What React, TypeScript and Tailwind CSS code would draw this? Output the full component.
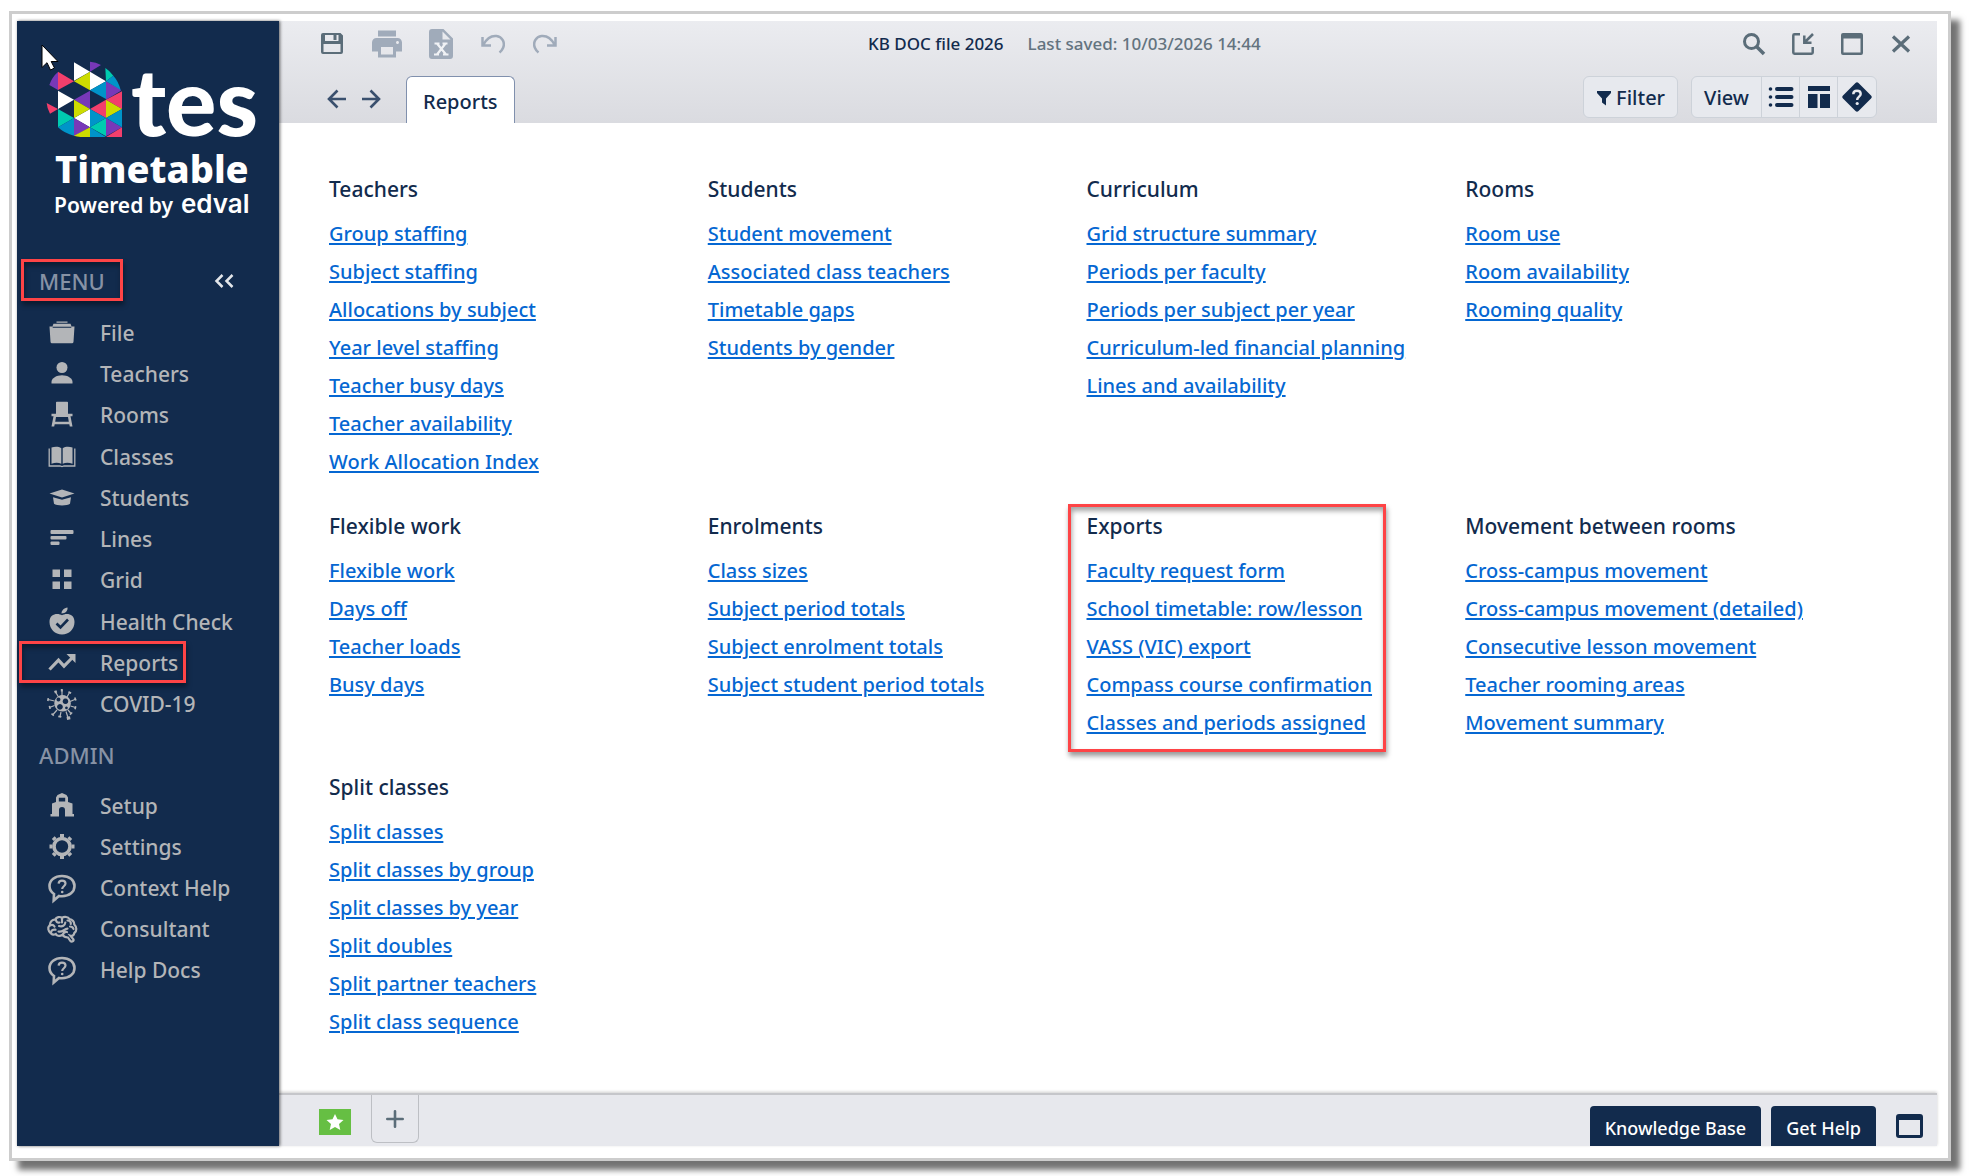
import type { ReactNode } from 'react';
import { MdPrint } from 'react-icons/md';

interface NavItem {
  label: string;
  icon: ReactNode;
  marked?: boolean;
}

interface ReportGroup {
  title: string;
  links: string[];
  marked?: boolean;
}

const reportGroups: ReportGroup[] = [
  {
    title: 'Teachers',
    links: [
      'Group staffing',
      'Subject staffing',
      'Allocations by subject',
      'Year level staffing',
      'Teacher busy days',
      'Teacher availability',
      'Work Allocation Index',
    ],
  },
  {
    title: 'Students',
    links: ['Student movement', 'Associated class teachers', 'Timetable gaps', 'Students by gender'],
  },
  {
    title: 'Curriculum',
    links: [
      'Grid structure summary',
      'Periods per faculty',
      'Periods per subject per year',
      'Curriculum-led financial planning',
      'Lines and availability',
    ],
  },
  { title: 'Rooms', links: ['Room use', 'Room availability', 'Rooming quality'] },
  { title: 'Flexible work', links: ['Flexible work', 'Days off', 'Teacher loads', 'Busy days'] },
  {
    title: 'Enrolments',
    links: ['Class sizes', 'Subject period totals', 'Subject enrolment totals', 'Subject student period totals'],
  },
  {
    title: 'Exports',
    marked: true,
    links: [
      'Faculty request form',
      'School timetable: row/lesson',
      'VASS (VIC) export',
      'Compass course confirmation',
      'Classes and periods assigned',
    ],
  },
  {
    title: 'Movement between rooms',
    links: [
      'Cross-campus movement',
      'Cross-campus movement (detailed)',
      'Consecutive lesson movement',
      'Teacher rooming areas',
      'Movement summary',
    ],
  },
  {
    title: 'Split classes',
    links: [
      'Split classes',
      'Split classes by group',
      'Split classes by year',
      'Split doubles',
      'Split partner teachers',
      'Split class sequence',
    ],
  },
];

// Sidebar glyphs share a 32px box and take the text colour
function NavIcon({ children }: { children: ReactNode }) {
  return (
    <svg viewBox="0 0 32 32" className="w-8 h-8 shrink-0" fill="currentColor" aria-hidden="true">
      {children}
    </svg>
  );
}

const helpIcon = (
  <NavIcon>
    <path
      d="M8 22C4.800 19.800 3.500 17 3.500 14C3.500 8 9 4 16 4C23.500 4 28.500 8.200 28.500 14C28.500 20 23.500 24.200 16 24.200C14.800 24.200 13.800 24.100 13 23.900L7.700 28.500Z"
      fill="none"
      stroke="currentColor"
      strokeWidth="2.600"
    />
    <path d="M12.600 11.700C12.800 9.500 14.200 8.700 16 8.700C18.200 8.700 19.500 9.900 19.500 11.600C19.500 14.300 16.200 14.200 16.200 17" fill="none" stroke="currentColor" strokeWidth="2.200" />
    <circle cx="16.200" cy="20" r="1.300" />
  </NavIcon>
);

const menuItems: NavItem[] = [
  {
    label: 'File',
    icon: (
      <NavIcon>
        <path d="M10.500 4.500h11v1.200h-11zM7.500 6.800h17l1.200 3H6.300zM3.500 9.500h2.800l.6 1.200h18.200l.6-1.200h2.800l-1 15.200q-.1 1.500-1.500 1.500H6q-1.400 0-1.500-1.500z" />
      </NavIcon>
    ),
  },
  {
    label: 'Teachers',
    icon: (
      <NavIcon>
        <circle cx="16" cy="9.500" r="5.500" />
        <path d="M5.500 25.500v-1.500c0-3.800 5-6.700 10.500-6.700s10.500 2.900 10.500 6.700v1.500z" />
      </NavIcon>
    ),
  },
  {
    label: 'Rooms',
    icon: (
      <NavIcon>
        <path d="M10 3.500q0-.8.800-.8h10.400q.8 0 .8.800v11.200h4.500v2.600h-2l2 10.200h-2.700l-.5-2.200H8.700l-.5 2.200H5.500l2-10.200h-2v-2.600h4.500zM10 18l-.8 4.800h13.600L22 18z" fillRule="evenodd" />
      </NavIcon>
    ),
  },
  {
    label: 'Classes',
    icon: (
      <NavIcon>
        <path d="M5.500 6.500C9 5.400 12.500 5.400 15.300 7.200V22.800C12.500 21.400 9 21.400 5.500 22.800zM26.500 6.500C23 5.400 19.500 5.400 16.700 7.200V22.800C19.500 21.400 23 21.400 26.500 22.800z" />
        <path d="M3.200 7.500V25H14l2 .6 2-.6h10.800V7.500" fill="none" stroke="currentColor" strokeWidth="1.300" />
      </NavIcon>
    ),
  },
  {
    label: 'Students',
    icon: (
      <NavIcon>
        <path d="M3.500 11.500L16 7.500l12.500 4L16 15.500zM7 15.200L16 17.800l9-2.600-1 6.500C21.500 24 10.500 24 8 21.700z" />
      </NavIcon>
    ),
  },
  {
    label: 'Lines',
    icon: (
      <NavIcon>
        <rect x="4.500" y="7" width="23" height="4" rx="1" />
        <rect x="4.500" y="13" width="16" height="3.600" rx="1" />
        <rect x="4.500" y="18.500" width="9" height="3.600" rx="1" />
      </NavIcon>
    ),
  },
  {
    label: 'Grid',
    icon: (
      <NavIcon>
        <path d="M6.500 5.500h7.500v7.500H6.500zM18 5.500h7.500v7.500H18zM6.500 17.500h7.500V25H6.500zM18 17.500h7.500V25H18z" />
      </NavIcon>
    ),
  },
  {
    label: 'Health Check',
    icon: (
      <NavIcon>
        <path d="M15.500 7.500C15.500 4.500 18 2 21.500 1.500C22 4.500 19.500 7.500 15.500 7.500zM16 9.300C19 7 28.500 6.500 28.500 16C28.500 23 23 28.500 16 28.500S3.500 23 3.500 16C3.500 6.500 13 7 16 9.300z" />
        <path d="M10.500 17.500l4 3.800 7.500-7.800" fill="none" stroke="#122b4d" strokeWidth="2.600" />
      </NavIcon>
    ),
  },
  {
    label: 'Reports',
    marked: true,
    icon: (
      <NavIcon>
        <path d="M3.500 22.500L12.500 13.200l5.500 6L26 11" fill="none" stroke="currentColor" strokeWidth="3.200" />
        <path d="M20.500 7H29.500V16z" />
      </NavIcon>
    ),
  },
  {
    label: 'COVID-19',
    icon: (
      <NavIcon>
        <g fill="none" stroke="currentColor" strokeWidth="1.200">
          <path d="M16 8V2M12.500 9L9.500 4M21 9l2.500-4.500M24 13.500l6-2.500M24.500 18l5 1.500M22 22l3.500 4M20 23.500l2 6M15 24l-1 4.500M11 22l-4 4.500M8.500 17.500L3.500 19.500M8.500 13L2 11.500" />
        </g>
        <path d="M14.800 1h2v2.400h-2zM8 3l2.500-.8.7 2.400L9 5.400zM22.800 3l2.700 1.400-.9 1.600-2.400-1.300zM29.500 9.300l1.200 3-1.700.5-1-3zM29 18l1.500.5-.7 3-1.600-.5zM26.700 25l-2.500 2.200-.8-1.300 2.400-1.900zM20.500 28.800l3.500-.6.5 3-3.400.8zM12.500 27.500l3 .6-.4 1.700-3-.6zM6 25l2.300 2-1 1.200L5 26.200zM2.600 18l1.600-.3.8 3-1.700.4zM1.500 10l1.600.3-.5 3L1 12.800z" />
        <path d="M16.500 7a8.300 8.300 0 1 0 .1 0zM12.500 9.500a2 2 0 1 1-.1 0zM19.500 10.500a2.800 2.800 0 1 1-.1 0zM14 16a2.900 2.900 0 1 1-.1 0zM20.500 18.500a1.400 1.400 0 1 1-.1 0z" fillRule="evenodd" />
      </NavIcon>
    ),
  },
];

const adminItems: NavItem[] = [
  {
    label: 'Setup',
    icon: (
      <NavIcon>
        <path d="M10 12V7.500L11.500 5L16 3l4.500 2L22 7.500V12l4.500 1.500V24h1.500v2.500H19V20a3 3 0 0 0-6 0v6.500H4.500V24H6V13.500zM12.800 11.500h6.400V7.800H12.800z" fillRule="evenodd" />
      </NavIcon>
    ),
  },
  {
    label: 'Settings',
    icon: (
      <NavIcon>
        <circle cx="16" cy="15.500" r="8" fill="none" stroke="currentColor" strokeWidth="3.600" />
        <g stroke="currentColor" strokeWidth="4">
          <path d="M16 3v3M16 25v3M3.500 15.500h3M25.500 15.500h3M7.200 6.700l2 2M22.800 22.300l2 2M24.800 6.700l-2 2M9.200 22.300l-2 2" />
        </g>
      </NavIcon>
    ),
  },
  { label: 'Context Help', icon: helpIcon },
  {
    label: 'Consultant',
    icon: (
      <NavIcon>
        <g fill="none" stroke="currentColor" strokeWidth="2.200" strokeLinecap="round">
          <path d="M5 20.500C2 18.500 1.300 14.500 3.800 12C3.800 8.500 6.500 6.500 9 6.700C10.500 4 14 3.300 16 4.800C18.500 3.200 22 3.800 23.500 6C26.500 6.300 28.500 9 28.300 11.500C31 14 31 18 28.300 20C28 22.500 26 23.300 24.500 22.800L27.500 26.500C28 28.500 25 29.300 24 27.500L22 24.500C19 24.500 17.500 23.500 16.500 21.800C13 23.800 10.500 22.500 9.800 21C8 22 6 21.500 5 20.500z" />
          <path d="M4 12.500C6 11.500 7.500 12 8.500 13.500M10 6.800C10.200 9 11.500 10 13.500 9.500M16 5v4.500M5 20c0-2.500 2-3.800 4.500-3.300M13 13c3.500 1 6-.5 6.300-3.500M21.500 7.500c2.500 0 3.500 1.500 3.300 3.500M12.500 18.500c4 1 5.500-2.500 9-2.800M17 21.500c.5-2 2-2.800 4-2.500M24 13.500c2 0 3 1 3.500 2.500" />
        </g>
      </NavIcon>
    ),
  },
  { label: 'Help Docs', icon: helpIcon },
];

function Marker({ className }: { className: string }) {
  return (
    <span
      className={`absolute pointer-events-none border-3 border-[#fe4446] shadow-[1px_4px_5px_rgba(0,0,0,0.4),inset_1px_4px_5px_rgba(0,0,0,0.35)] ${className}`}
    />
  );
}

function Mosaic() {
  return (
    <svg viewBox="48 36 231 231" className="w-[77px] h-[77px] shrink-0" aria-hidden="true">
      <g fill="#fff">
        <path d="M132 40V95L180 68zM180 68V124L228 97zM84 125V180L132 152zM180 180V235L132 207z" />
      </g>
      <g fill="#7838b8">
        <path d="M180 68V38Q198 39 213 48zM84 69V123L58 108Q66 84 84 69zM180 125V180L132 152zM228 97V152L273 125L270 120zM132 207V262L180 235zM228 207V262L276 235z" />
      </g>
      <g fill="#f23f6c">
        <path d="M84 68V123L132 97zM276 127V180L228 152zM228 152V207L180 180zM50 162L84 180L60 194Q51 178 50 162zM276 235V264H228z" />
      </g>
      <g fill="#cddc00">
        <path d="M180 68V124L132 97zM132 152V207L180 180zM228 152V207L276 180zM180 235V264H152Q140 262 132 260z" />
      </g>
      <g fill="#00cbb0">
        <path d="M228 97L226 57Q240 66 250 80zM84 180V235L132 207zM228 207V262L180 235z" />
      </g>
      <g fill="#0094c9">
        <path d="M228 97L250 80Q266 98 272 123zM228 97V150L180 124zM180 180V235L228 207zM276 180V235L228 207zM132 207V260Q104 254 84 235zM180 235V264H228z" />
      </g>
    </svg>
  );
}

function NavList({ items }: { items: NavItem[] }) {
  return (
    <>
      {items.map((item) => (
        <li key={item.label} className="flex-1 flex items-center">
          <a href="#" className="relative flex items-center gap-[22px] pl-[29px] text-[21px] leading-8 font-medium text-[#b3b5b8]">
            {item.icon}
            {item.label}
            {item.marked && <Marker className="left-[2px] -right-2 -top-[6px] -bottom-1" />}
          </a>
        </li>
      ))}
    </>
  );
}

function Sidebar() {
  return (
    <nav className="relative z-10 w-[262px] shrink-0 bg-[#122b4d] shadow-[1px_0_3px_rgba(0,0,0,0.6)]">
      <div className="pt-10 h-[238px] text-white">
        <div className="flex items-end pl-[29px] gap-2">
          <Mosaic />
          <span className="font-['Lato',sans-serif] font-black text-[94px] leading-[77px]">tes</span>
        </div>
        <div className="pl-[38px] mt-[10px] text-[38px] leading-10 font-extrabold">Timetable</div>
        <div className="pl-[37px] flex gap-2 items-baseline text-[21px] leading-8 font-semibold">
          Powered by
          <span className="font-['Inter',sans-serif] font-semibold text-[26px] leading-8">edval</span>
        </div>
      </div>

      <div className="flex items-center justify-between pr-[45px] h-[42px]">
        <h2 className="relative ml-1 pl-[18px] pr-[18px] pt-[2px] leading-[44px] text-[22px] font-medium text-[#8792a5]">
          MENU
          <Marker className="inset-x-0 inset-y-[2px]" />
        </h2>
        <button aria-label="Collapse menu" className="pt-[2px] text-[#e3e6ea]">
          <svg viewBox="0 0 20 16" className="w-5 h-4" fill="none" stroke="currentColor" strokeWidth="2.500">
            <path d="M8.500 2L2.500 8l6 6M18.500 2l-6 6 6 6" />
          </svg>
        </button>
      </div>
      <ul className="flex flex-col h-[413px] mt-[11px]">
        <NavList items={menuItems} />
      </ul>
      <h2 className="pl-[22px] text-[22px] leading-[60px] font-medium text-[#8792a5]">ADMIN</h2>
      <ul className="flex flex-col h-[206px]">
        <NavList items={adminItems} />
      </ul>
    </nav>
  );
}

function Header() {
  return (
    <header className="h-[102px] flex flex-col justify-between bg-linear-to-b from-[#ebecf0] to-[#dadbe0] text-[#122b4d]">
      <div className="flex items-center h-[45px]">
        <div className="w-[589px] shrink-0 pl-[41px] flex items-center text-[#a0abba]">
          <button aria-label="Save" className="mr-[25px] text-[#5b6d79]">
            <svg viewBox="0 0 24 24" className="w-6 h-6" fill="currentColor">
              <path d="M3 1h17.500L23 3.500V20q0 2-2 2H3q-2 0-2-2V3q0-2 2-2zM5 3v5.500q0 .5.500.5H18q.5 0 .5-.5V3h-2v5h-3V3zM3.500 12v8h17v-8z" fillRule="evenodd" />
            </svg>
          </button>
          <button aria-label="Print" className="mr-6">
            <MdPrint className="w-9 h-9" />
          </button>
          <button aria-label="Export to Excel" className="mr-7">
            <svg viewBox="0 0 24 30" className="w-6 h-[30px]" fill="currentColor">
              <path d="M3 0h11.500L24 9.500V27q0 3-3 3H3q-3 0-3-3V3q0-3 3-3zM13.500 2.500v8h8z" fillRule="evenodd" />
              <path d="M5.500 14.500h5M13.500 14.500h5M5 25.500h5M14 25.500h5.500M8 14.500l9 11M16.500 14.500L8 25.500" stroke="#f0f2f5" strokeWidth="2.200" />
            </svg>
          </button>
          <button aria-label="Undo" className="mr-7">
            <svg viewBox="0 0 24 20" className="w-6 h-5" fill="none" stroke="currentColor" strokeWidth="2.500">
              <path d="M1.500 3v8.500h8.500M2.500 10.500C6 4 11 1.500 15.500 2C21 2.700 24.500 8.500 22 14Q21 16.500 18.500 18.500" />
            </svg>
          </button>
          <button aria-label="Redo">
            <svg viewBox="0 0 24 20" className="w-6 h-5" fill="none" stroke="currentColor" strokeWidth="2.500">
              <path d="M22.500 3v8.500h-8.500M21.500 10.500C18 4 13 1.500 8.500 2C3 2.700-.5 8.500 2 14Q3 16.500 5.500 18.500" />
            </svg>
          </button>
        </div>
        <div className="flex gap-6 text-[17px] font-medium whitespace-nowrap">
          <span>KB DOC file 2026</span>
          <span className="text-[#63737f]">Last saved: 10/03/2026 14:44</span>
        </div>
        <div className="ml-auto pr-6 flex items-center gap-[25px] text-[#5b6d79]">
          <button aria-label="Search">
            <svg viewBox="0 0 24 24" className="w-6 h-6" fill="none" stroke="currentColor">
              <circle cx="9.500" cy="9.500" r="7" strokeWidth="3" />
              <path d="M14.500 14.500l7.500 7.500" strokeWidth="3.500" />
            </svg>
          </button>
          <button aria-label="Dock window">
            <svg viewBox="0 0 24 24" className="w-6 h-6" fill="none" stroke="currentColor" strokeWidth="2.500">
              <path d="M9 2.300H3.500Q2.300 2.300 2.300 3.500V20.500Q2.300 21.700 3.500 21.700H20.500Q21.700 21.700 21.700 20.500V15M22 2L14 10M13.300 3.500V10.700H20.500" />
            </svg>
          </button>
          <button aria-label="Maximise">
            <svg viewBox="0 0 24 24" className="w-6 h-6" fill="currentColor">
              <path d="M3 1h18q2 0 2 2v18q0 2-2 2H3q-2 0-2-2V3q0-2 2-2zM3.500 6.500v14h17v-14z" fillRule="evenodd" />
            </svg>
          </button>
          <button aria-label="Close">
            <svg viewBox="0 0 24 24" className="w-6 h-6" fill="none" stroke="currentColor" strokeWidth="3.200">
              <path d="M4 4.500l16 15M20 4.500l-16 15" />
            </svg>
          </button>
        </div>
      </div>

      <div className="flex items-end h-[47px]">
        <div className="flex gap-[14px] pl-12 pb-[14px] text-[#3a506e]">
          <button aria-label="Back">
            <svg viewBox="0 0 20 20" className="w-5 h-5" fill="none" stroke="currentColor" strokeWidth="2.600">
              <path d="M19 10H2.500M10.500 1.500L2 10l8.500 8.500" />
            </svg>
          </button>
          <button aria-label="Forward">
            <svg viewBox="0 0 20 20" className="w-5 h-5" fill="none" stroke="currentColor" strokeWidth="2.600">
              <path d="M1 10h16.500M9.500 1.500L18 10l-8.500 8.500" />
            </svg>
          </button>
        </div>
        <button className="ml-[25px] h-full px-4 pt-1 bg-white border border-b-0 border-[#8090ad] rounded-t-md text-xl font-medium">
          Reports
        </button>
        <div className="ml-auto mr-15 self-start flex gap-[13px] text-xl font-medium">
          <button className="h-[42px] pt-px pl-3 pr-3 flex items-center gap-1 border border-[#cdd2d9] rounded-md bg-[#e7e9ee]">
            <svg viewBox="0 0 16 16" className="w-4 h-4" fill="currentColor" aria-hidden="true">
              <path d="M1 1h14v2L10 8.500V15.500L6 12.500V8.500L1 3z" />
            </svg>
            Filter
          </button>
          <div className="h-[42px] flex border border-[#cdd2d9] rounded-md bg-[#e7e9ee] divide-x divide-[#cdd2d9]">
            <button className="px-3 pt-px">View</button>
            <button aria-label="List view" className="w-[38px] flex items-center justify-center">
              <svg viewBox="0 0 26 22" className="w-[26px] h-[22px]" fill="currentColor">
                <circle cx="2.500" cy="3" r="1.800" />
                <circle cx="2.500" cy="11" r="1.800" />
                <circle cx="2.500" cy="19" r="1.800" />
                <path d="M9 3h14.500M9 11h14.500M9 19h14.500" stroke="currentColor" strokeWidth="4" strokeLinecap="round" />
              </svg>
            </button>
            <button aria-label="Table view" className="w-[38px] flex items-center justify-center">
              <svg viewBox="0 0 22 22" className="w-[22px] h-[22px]" fill="currentColor">
                <path d="M0 0h22v5H0zM0 8h9.500v14H0zM12 8h10v14H12z" />
              </svg>
            </button>
            <button aria-label="Help" className="w-[38px] flex items-center justify-center">
              <svg viewBox="0 0 30 30" className="w-[30px] h-[30px]" fill="currentColor">
                <path d="M13.500 1Q15-.5 16.500 1L29 13.500q1.500 1.500 0 3L16.500 29q-1.500 1.500-3 0L1 16.500q-1.500-1.500 0-3z" />
                <path d="M11.300 12.200C11.300 9.800 13 8.800 15 8.800C17.200 8.800 18.700 10 18.700 12C18.700 14.700 15.200 14.800 15.200 18" fill="none" stroke="#e7e9ee" strokeWidth="2.400" />
                <circle cx="15.200" cy="21.500" r="1.600" fill="#e7e9ee" />
              </svg>
            </button>
          </div>
        </div>
      </div>
    </header>
  );
}

function Footer() {
  return (
    <footer className="h-[53px] flex items-start pl-10 border-t-2 border-[#c5c6ca] bg-[#e7e8ed] shadow-[0_-1px_3px_rgba(0,0,0,0.2)]">
      <button aria-label="Favourites" className="mt-[14px] w-8 h-[26px] bg-[#66bf43] flex items-center justify-center">
        <svg viewBox="0 0 18 16" className="w-[18px] h-4" fill="#fff">
          <path d="M9 0l2.500 5.300 6 .6-4.500 4 1.300 6L9 12.900 3.700 15.900 5 9.900.5 5.900l6-.6z" />
        </svg>
      </button>
      <button aria-label="Add tab" className="ml-5 w-12 h-12 border border-t-0 border-[#bdbfc4] rounded-b-md flex items-center justify-center">
        <svg viewBox="0 0 18 18" className="w-[18px] h-[18px]" fill="none" stroke="#5b6d79" strokeWidth="2.600" strokeLinecap="round">
          <path d="M9 1.300v15.400M1.300 9h15.400" />
        </svg>
      </button>
      <div className="ml-auto mr-[14px] mt-[11px] self-stretch flex gap-[10px] text-lg font-medium text-white">
        <button className="px-[15px] pt-[3px] rounded-t bg-[#122b4d]">Knowledge Base</button>
        <button className="px-[15px] pt-[3px] rounded-t bg-[#122b4d]">Get Help</button>
        <button aria-label="Show window" className="ml-[10px] text-[#122b4d]">
          <svg viewBox="0 0 27 24" className="w-[27px] h-6" fill="currentColor">
            <path d="M3 0h21q3 0 3 3v18q0 3-3 3H3q-3 0-3-3V3q0-3 3-3zM3 6v15h21V6z" fillRule="evenodd" />
          </svg>
        </button>
      </div>
    </footer>
  );
}

export default function App() {
  return (
    <div className="min-h-screen flex bg-white pt-[11px] pl-[9px] pr-9 pb-[15px] font-['Noto_Sans',sans-serif]">
      <div className="relative flex-1 flex border-3 border-[#cdcdcd] bg-white pt-[7px] pl-[5px] pr-[11px] pb-3 shadow-[9px_9px_6px_rgba(0,0,0,0.55)]">
        <Sidebar />
        <div className="flex-1 min-w-0 flex flex-col">
          <Header />
          <main className="flex-1 grid grid-cols-4 content-start gap-y-[26px] pt-[47px] pl-[50px] pr-[93px]">
            {reportGroups.map((group) => (
              <section key={group.title} className="relative">
                <h2 className="mb-[7px] text-[21px] leading-[38px] font-medium text-[#122b4d]">{group.title}</h2>
                <ul>
                  {group.links.map((link) => (
                    <li key={link} className="text-xl leading-[38px] font-medium whitespace-nowrap">
                      <a href="#" className="text-[#0567d2] underline underline-offset-2">
                        {link}
                      </a>
                    </li>
                  ))}
                </ul>
                {group.marked && <Marker className="-left-[19px] w-[318px] -top-[3px] -bottom-[10px]" />}
              </section>
            ))}
          </main>
          <Footer />
        </div>
        {/* mouse pointer */}
        <svg viewBox="0 0 18 27" className="absolute left-[29px] top-[30px] w-[18px] h-[27px] z-20" aria-hidden="true">
          <path d="M1 1V23.500L6 18.700L9.500 26L13.500 24L10.200 17.500H17z" fill="#fff" stroke="#000" strokeWidth="1" />
        </svg>
      </div>
    </div>
  );
}
